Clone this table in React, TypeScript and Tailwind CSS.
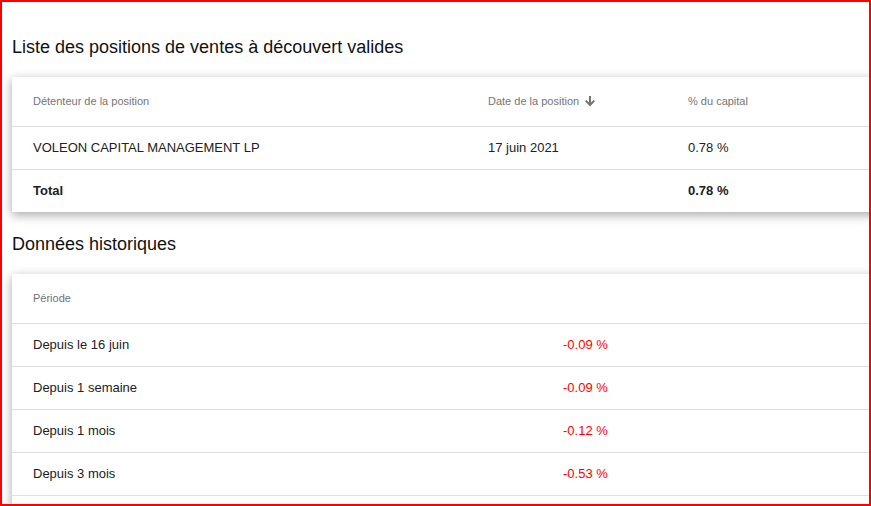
import React from "react";

const positions = [
  { holder: "VOLEON CAPITAL MANAGEMENT LP", date: "17 juin 2021", pct: "0.78 %" },
];

const history = [
  { label: "Depuis le 16 juin", value: "-0.09 %" },
  { label: "Depuis 1 semaine", value: "-0.09 %" },
  { label: "Depuis 1 mois", value: "-0.12 %" },
  { label: "Depuis 3 mois", value: "-0.53 %" },
];

function ArrowDown() {
  return (
    <svg width="10" height="11" viewBox="0 0 10 11" className="ml-[6px] inline-block">
      <path fill="#757575" d="M4 0h2v6.5l2.6-2.6L10 5.2 5 10.5 0 5.2l1.4-1.3L4 6.5z" />
    </svg>
  );
}

export default function App() {
  return (
    <div
      className="box-border h-[506px] w-[871px] overflow-hidden border-2 border-[#ff0000] bg-white pl-[10px] pt-[33px] text-[#212121]"
      style={{ fontFamily: '"Liberation Sans", Arial, sans-serif' }}
    >
      <h2 className="h-6 text-[18px] leading-6 text-[#111]">
        Liste des positions de ventes à découvert valides
      </h2>
      <div className="mt-[18px] w-[880px] bg-white shadow-[0_3px_10px_rgba(0,0,0,0.35)]">
        <div className="flex h-[50px] items-center border-b border-[#e0e0e0] pl-[21px] text-[11px] text-[#757575]">
          <div className="w-[455px]">Détenteur de la position</div>
          <div className="flex w-[200px] items-center">
            Date de la position
            <ArrowDown />
          </div>
          <div>% du capital</div>
        </div>
        {positions.map((p) => (
          <div
            key={p.holder}
            className="flex h-[43px] items-center border-b border-[#e0e0e0] pl-[21px] text-[13px]"
          >
            <div className="w-[455px]">{p.holder}</div>
            <div className="w-[200px]">{p.date}</div>
            <div>{p.pct}</div>
          </div>
        ))}
        <div className="flex h-[42px] items-center pl-[21px] text-[13px] font-bold">
          <div className="w-[655px]">Total</div>
          <div>0.78 %</div>
        </div>
      </div>

      <h2 className="mt-[20px] h-6 text-[18px] leading-6 text-[#111]">Données historiques</h2>
      <div className="mt-[18px] w-[880px] bg-white shadow-[0_3px_10px_rgba(0,0,0,0.35)]">
        <div className="flex h-[50px] items-center border-b border-[#e0e0e0] pl-[21px] text-[11px] text-[#6b7280]">
          Période
        </div>
        {history.map((h) => (
          <div
            key={h.label}
            className="flex h-[43px] items-center border-b border-[#e0e0e0] pl-[21px] text-[13px]"
          >
            <div className="w-[530px]">{h.label}</div>
            <div className="text-[#ff0000]">{h.value}</div>
          </div>
        ))}
        <div className="h-[30px]" />
      </div>
    </div>
  );
}
